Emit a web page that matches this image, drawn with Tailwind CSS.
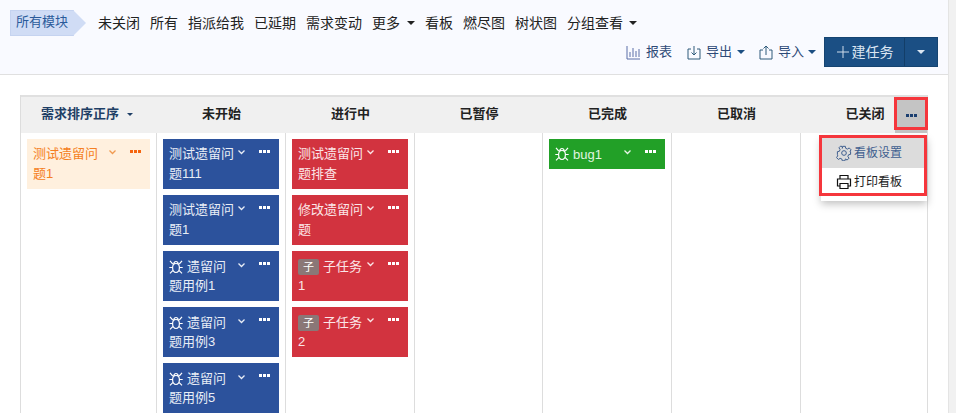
<!DOCTYPE html>
<html><head><meta charset="utf-8"><script src="https://cdn.jsdelivr.net/npm/@tailwindcss/browser@4"></script></head>
<body class="bg-white">
<div class="relative w-[956px] h-[413px] overflow-hidden flex font-['Liberation_Sans','Noto_Sans_CJK_SC',sans-serif] text-[13px] text-[#222]">
 <div class="w-[948px] shrink-0 h-full flex flex-col">
  <div class="h-[75px] shrink-0 bg-[#f9faff] border-b border-[#e0e0e0] pl-[10px] pr-[10px] flex flex-col">
   <div class="flex items-center h-[26px] mt-[10px]">
    <div class="relative h-[26px] w-[64px] bg-[#d0dcf5] border border-[#c5d3f0] text-[#2a5a9a] pl-[5px] leading-[22px]">所有模块
     <span class="absolute left-[62px] top-[-1px] w-0 h-0 border-y-[13px] border-y-transparent border-l-[13px] border-l-[#d0dcf5]"></span>
    </div>
    <div class="flex gap-[10px] ml-[24px] items-center leading-[26px] text-[14px]">
     <span>未关闭</span><span>所有</span><span>指派给我</span><span>已延期</span><span>需求变动</span>
     <span class="flex items-center gap-[7px]">更多<i class="w-0 h-0 border-x-[4px] border-x-transparent border-t-[4px] border-t-[#222]"></i></span>
     <span>看板</span><span>燃尽图</span><span>树状图</span>
     <span class="flex items-center gap-[6px]">分组查看<i class="w-0 h-0 border-x-[4px] border-x-transparent border-t-[4px] border-t-[#222]"></i></span>
    </div>
   </div>
   <div class="flex items-center justify-end h-[30px] mt-[1px] text-[#2e4a78]">
    <span class="flex items-center gap-[5px]">
     <svg width="15" height="15" viewBox="0 0 15 15" fill="none" stroke="#5b6fa8"><path d="M1 1v13h13M4 12V7M7 12V3M10 12V6M13 12V4"/></svg>报表</span>
    <span class="flex items-center gap-[5px] ml-[15px]">
     <svg width="14" height="15" viewBox="0 0 14 15" fill="none" stroke="#2e5a7a"><path d="M4 4H1v10h12V4h-3M7 1v9M4.5 7.5L7 10l2.500-2.500"/></svg>导出<i class="w-0 h-0 border-x-[4px] border-x-transparent border-t-[4px] border-t-[#1c4f82]"></i></span>
    <span class="flex items-center gap-[5px] ml-[14px]">
     <svg width="14" height="15" viewBox="0 0 14 15" fill="none" stroke="#2e5a7a"><path d="M4 5H1v9h12V5h-3M7 10V1M4.500 3.500L7 1l2.500 2.500"/></svg>导入<i class="w-0 h-0 border-x-[4px] border-x-transparent border-t-[4px] border-t-[#1c4f82] ml-[-1px]"></i></span>
    <div class="flex h-[30px] ml-[8px] bg-[#1b4f84] text-[#dbe6f2] text-[14px] border border-[#164471]">
     <span class="w-[80px] flex items-center justify-center gap-[2px] border-r border-[#133e68]">
      <svg width="14" height="14" viewBox="0 0 14 14" stroke="#cfdcea" fill="none"><path d="M7 1v12M1 7h12"/></svg>建任务</span>
     <span class="w-[32px] flex items-center justify-center"><i class="w-0 h-0 border-x-[4px] border-x-transparent border-t-[4px] border-t-[#dbe6f2]"></i></span>
    </div>
   </div>
  </div>
  <div class="pl-[20px] pt-[20px] flex-1 min-h-0">
   <div class="w-[908px] h-full flex flex-col border-l border-r border-[#ddd]">
    <div class="h-[38px] shrink-0 pb-[2px] bg-[#f0f0f0] border-t-2 border-[#e0e0e0] grid grid-cols-[136px_129px_129px_128px_129px_129px_128px] font-bold text-[13px] items-center text-center relative">
     <div class="text-[#1f3f66] flex items-center justify-center gap-[8px] pr-[4px]">需求排序正序<i class="w-0 h-0 border-x-[3px] border-x-transparent border-t-[3px] border-t-[#1f3f66]"></i></div>
     <div>未开始</div><div>进行中</div><div>已暂停</div><div>已完成</div><div>已取消</div>
     <div>已关闭</div>
     <div class="absolute right-0 top-0 w-[32px] h-[36px] bg-[#c4c4c4] flex items-center justify-center gap-[1px]">
      <i class="w-[3px] h-[3px] bg-[#1c3f70]"></i><i class="w-[3px] h-[3px] bg-[#1c3f70]"></i><i class="w-[3px] h-[3px] bg-[#1c3f70]"></i>
     </div>
    </div>
    <div class="flex-1 min-h-0 grid grid-cols-[136px_129px_129px_128px_129px_129px_128px] overflow-hidden">
     <div class="border-r border-[#ddd] pt-[6px] pl-[6px] pr-[6px]">
      <div class="relative h-[50px] bg-[#fff0de] text-[#f57f22] pl-[6px] pt-[5px] pr-[6px] leading-[20px]"><div class="w-[70px]">测试遗留问题1</div>
       <svg class="absolute left-[82px] top-[11px]" width="7" height="5" viewBox="0 0 7 5" fill="none" stroke="#f09a50" stroke-width="1.300"><path d="M.5 .5L3.500 3.500 6.500 .5"/></svg>
       <div class="absolute right-[9px] top-[11px] flex gap-[1px]"><i class="w-[3px] h-[3px] bg-[#f5650f]"></i><i class="w-[3px] h-[3px] bg-[#f5650f]"></i><i class="w-[3px] h-[3px] bg-[#f5650f]"></i></div>
      </div>
     </div>
     <div class="border-r border-[#ddd] pt-[6px] pl-[6px] pr-[6px] flex flex-col gap-[6px]">
      <div class="relative h-[50px] shrink-0 bg-[#2c529c] text-[#e8edf6] pl-[6px] pt-[5px] leading-[20px]"><div class="w-[70px]">测试遗留问题111</div>
       <svg class="absolute left-[75px] top-[11px]" width="7" height="5" viewBox="0 0 7 5" fill="none" stroke="#e8edf6" stroke-width="1.300"><path d="M.5 .5L3.500 3.500 6.500 .5"/></svg>
       <div class="absolute right-[9px] top-[11px] flex gap-[1px]"><i class="w-[3px] h-[3px] bg-white"></i><i class="w-[3px] h-[3px] bg-white"></i><i class="w-[3px] h-[3px] bg-white"></i></div>
      </div>
      <div class="relative h-[50px] shrink-0 bg-[#2c529c] text-[#e8edf6] pl-[6px] pt-[5px] leading-[20px]"><div class="w-[70px]">测试遗留问题1</div>
       <svg class="absolute left-[75px] top-[11px]" width="7" height="5" viewBox="0 0 7 5" fill="none" stroke="#e8edf6" stroke-width="1.300"><path d="M.5 .5L3.500 3.500 6.500 .5"/></svg>
       <div class="absolute right-[9px] top-[11px] flex gap-[1px]"><i class="w-[3px] h-[3px] bg-white"></i><i class="w-[3px] h-[3px] bg-white"></i><i class="w-[3px] h-[3px] bg-white"></i></div>
      </div>
      <div class="relative h-[50px] shrink-0 bg-[#2c529c] text-[#e8edf6] pl-[6px] pt-[5px] leading-[20px]"><div class="flex items-start gap-[4px] h-[20px] pt-[1px]"><svg class="mt-[3px]" width="14" height="14" viewBox="0 0 14 14" fill="none" stroke="#fff" stroke-width="1.200"><path d="M7 3.500c2.200 0 3.400 1.800 3.400 4.300S9 12.500 7 12.500 3.600 10.300 3.600 7.800 4.800 3.500 7 3.500zM4.800 3.800C5 2.400 5.900 1.500 7 1.500s2 .9 2.200 2.300M1 .8l2.800 3.400M13 .8l-2.800 3.400M.3 7.500h3.300M13.700 7.500h-3.300M1 13.300l3-3M13 13.300l-3-3"/></svg>遗留问</div><div>题用例1</div>
       <svg class="absolute left-[75px] top-[12px]" width="7" height="5" viewBox="0 0 7 5" fill="none" stroke="#e8edf6" stroke-width="1.300"><path d="M.5 .5L3.500 3.500 6.500 .5"/></svg>
       <div class="absolute right-[9px] top-[11px] flex gap-[1px]"><i class="w-[3px] h-[3px] bg-white"></i><i class="w-[3px] h-[3px] bg-white"></i><i class="w-[3px] h-[3px] bg-white"></i></div>
      </div>
      <div class="relative h-[50px] shrink-0 bg-[#2c529c] text-[#e8edf6] pl-[6px] pt-[5px] leading-[20px]"><div class="flex items-start gap-[4px] h-[20px] pt-[1px]"><svg class="mt-[3px]" width="14" height="14" viewBox="0 0 14 14" fill="none" stroke="#fff" stroke-width="1.200"><path d="M7 3.500c2.200 0 3.400 1.800 3.400 4.300S9 12.500 7 12.500 3.600 10.300 3.600 7.800 4.800 3.500 7 3.500zM4.800 3.800C5 2.400 5.900 1.500 7 1.500s2 .9 2.200 2.300M1 .8l2.800 3.400M13 .8l-2.800 3.400M.3 7.500h3.300M13.700 7.500h-3.300M1 13.300l3-3M13 13.300l-3-3"/></svg>遗留问</div><div>题用例3</div>
       <svg class="absolute left-[75px] top-[12px]" width="7" height="5" viewBox="0 0 7 5" fill="none" stroke="#e8edf6" stroke-width="1.300"><path d="M.5 .5L3.500 3.500 6.500 .5"/></svg>
       <div class="absolute right-[9px] top-[11px] flex gap-[1px]"><i class="w-[3px] h-[3px] bg-white"></i><i class="w-[3px] h-[3px] bg-white"></i><i class="w-[3px] h-[3px] bg-white"></i></div>
      </div>
      <div class="relative h-[50px] shrink-0 bg-[#2c529c] text-[#e8edf6] pl-[6px] pt-[5px] leading-[20px]"><div class="flex items-start gap-[4px] h-[20px] pt-[1px]"><svg class="mt-[3px]" width="14" height="14" viewBox="0 0 14 14" fill="none" stroke="#fff" stroke-width="1.200"><path d="M7 3.500c2.200 0 3.400 1.800 3.400 4.300S9 12.500 7 12.500 3.600 10.300 3.600 7.800 4.800 3.500 7 3.500zM4.800 3.800C5 2.400 5.900 1.500 7 1.500s2 .9 2.200 2.300M1 .8l2.800 3.400M13 .8l-2.800 3.400M.3 7.500h3.300M13.700 7.500h-3.300M1 13.300l3-3M13 13.300l-3-3"/></svg>遗留问</div><div>题用例5</div>
       <svg class="absolute left-[75px] top-[12px]" width="7" height="5" viewBox="0 0 7 5" fill="none" stroke="#e8edf6" stroke-width="1.300"><path d="M.5 .5L3.500 3.500 6.500 .5"/></svg>
       <div class="absolute right-[9px] top-[11px] flex gap-[1px]"><i class="w-[3px] h-[3px] bg-white"></i><i class="w-[3px] h-[3px] bg-white"></i><i class="w-[3px] h-[3px] bg-white"></i></div>
      </div>
     </div>
     <div class="border-r border-[#ddd] pt-[6px] pl-[6px] pr-[6px] flex flex-col gap-[6px]">
      <div class="relative h-[50px] shrink-0 bg-[#d2333f] text-[#fbe6e8] pl-[6px] pt-[5px] leading-[20px]"><div class="w-[70px]">测试遗留问题排查</div>
       <svg class="absolute left-[75px] top-[11px]" width="7" height="5" viewBox="0 0 7 5" fill="none" stroke="#fbe6e8" stroke-width="1.300"><path d="M.5 .5L3.500 3.500 6.500 .5"/></svg>
       <div class="absolute right-[9px] top-[11px] flex gap-[1px]"><i class="w-[3px] h-[3px] bg-white"></i><i class="w-[3px] h-[3px] bg-white"></i><i class="w-[3px] h-[3px] bg-white"></i></div>
      </div>
      <div class="relative h-[50px] shrink-0 bg-[#d2333f] text-[#fbe6e8] pl-[6px] pt-[5px] leading-[20px]"><div class="w-[70px]">修改遗留问题</div>
       <svg class="absolute left-[75px] top-[11px]" width="7" height="5" viewBox="0 0 7 5" fill="none" stroke="#fbe6e8" stroke-width="1.300"><path d="M.5 .5L3.500 3.500 6.500 .5"/></svg>
       <div class="absolute right-[9px] top-[11px] flex gap-[1px]"><i class="w-[3px] h-[3px] bg-white"></i><i class="w-[3px] h-[3px] bg-white"></i><i class="w-[3px] h-[3px] bg-white"></i></div>
      </div>
      <div class="relative h-[50px] shrink-0 bg-[#d2333f] text-[#fbe6e8] pl-[6px] pt-[5px] leading-[20px]"><div class="flex items-start gap-[4px] h-[20px] pt-[1px]"><span class="w-[21px] h-[16px] mt-[2px] rounded-[2px] bg-[#8a7777] text-white text-[11px] leading-[16px] text-center">子</span>子任务</div><div>1</div>
       <svg class="absolute left-[75px] top-[11px]" width="7" height="5" viewBox="0 0 7 5" fill="none" stroke="#fbe6e8" stroke-width="1.300"><path d="M.5 .5L3.500 3.500 6.500 .5"/></svg>
       <div class="absolute right-[9px] top-[11px] flex gap-[1px]"><i class="w-[3px] h-[3px] bg-white"></i><i class="w-[3px] h-[3px] bg-white"></i><i class="w-[3px] h-[3px] bg-white"></i></div>
      </div>
      <div class="relative h-[50px] shrink-0 bg-[#d2333f] text-[#fbe6e8] pl-[6px] pt-[5px] leading-[20px]"><div class="flex items-start gap-[4px] h-[20px] pt-[1px]"><span class="w-[21px] h-[16px] mt-[2px] rounded-[2px] bg-[#8a7777] text-white text-[11px] leading-[16px] text-center">子</span>子任务</div><div>2</div>
       <svg class="absolute left-[75px] top-[11px]" width="7" height="5" viewBox="0 0 7 5" fill="none" stroke="#fbe6e8" stroke-width="1.300"><path d="M.5 .5L3.500 3.500 6.500 .5"/></svg>
       <div class="absolute right-[9px] top-[11px] flex gap-[1px]"><i class="w-[3px] h-[3px] bg-white"></i><i class="w-[3px] h-[3px] bg-white"></i><i class="w-[3px] h-[3px] bg-white"></i></div>
      </div>
     </div>
     <div class="border-r border-[#ddd]"></div>
     <div class="border-r border-[#ddd] pt-[6px] pl-[6px] pr-[6px]">
      <div class="relative h-[30px] bg-[#22a027] text-[#e0f5e0] pl-[6px] pt-[5px] leading-[20px]"><div class="flex items-start gap-[4px] h-[20px] pt-[1px]"><svg class="mt-[2px]" width="14" height="14" viewBox="0 0 14 14" fill="none" stroke="#fff" stroke-width="1.200"><path d="M7 3.500c2.200 0 3.400 1.800 3.400 4.300S9 12.500 7 12.500 3.600 10.300 3.600 7.800 4.800 3.500 7 3.500zM4.800 3.800C5 2.400 5.900 1.500 7 1.500s2 .9 2.200 2.300M1 .8l2.800 3.400M13 .8l-2.800 3.400M.3 7.500h3.300M13.700 7.500h-3.300M1 13.300l3-3M13 13.300l-3-3"/></svg>bug1</div>
       <svg class="absolute left-[75px] top-[11px]" width="7" height="5" viewBox="0 0 7 5" fill="none" stroke="#e8f5e8" stroke-width="1.300"><path d="M.5 .5L3.500 3.500 6.500 .5"/></svg>
       <div class="absolute right-[9px] top-[11px] flex gap-[1px]"><i class="w-[3px] h-[3px] bg-white"></i><i class="w-[3px] h-[3px] bg-white"></i><i class="w-[3px] h-[3px] bg-white"></i></div>
      </div>
     </div>
     <div class="border-r border-[#ddd]"></div>
     <div></div>
    </div>
   </div>
  </div>
 </div>
 <div class="flex-1 bg-[#f1f1f1] border-l border-[#e4e4e4]"></div>

 <!-- dropdown menu -->
 <div class="absolute left-[821px] top-[137px] w-[106px] h-[64px] bg-white shadow-[0_3px_8px_rgba(0,0,0,0.25)] text-[12px]">
  <div class="h-[31px] bg-[#dcdcdc] text-[#3f5f8f] flex items-center pl-[15px] gap-[2px]">
   <svg width="16" height="16" viewBox="0 0 24 24" fill="none" stroke="#3f5f8f" stroke-width="1.500"><circle cx="12" cy="12" r="3.500"/><path d="M10 2h4l.6 3 2.600 1.100 2.600-1.700 2.800 2.800-1.700 2.600L21.900 10v4l-3 .6-1.100 2.600 1.700 2.600-2.800 2.800-2.600-1.700-.1.100-.6 2.700h-4l-.6-2.700-2.600-1-2.600 1.700-2.800-2.800 1.700-2.600L2.100 14v-4l3-.6 1-2.600-1.700-2.600 2.800-2.800 2.600 1.700L9.400 5z"/></svg>看板设置</div>
  <div class="h-[29px] flex items-center pl-[15px] pb-[2px] gap-[2px] text-[#222]">
   <svg width="16" height="16" viewBox="0 0 16 16" fill="none" stroke="#111" stroke-width="1.200"><path d="M4 5V1.500h8V5M4 12H1.500V5h13v7H12M4 9.500h8v5H4z"/></svg>打印看板</div>
 </div>
 <!-- red annotations -->
 <div class="absolute left-[894px] top-[97px] w-[34px] h-[33px] border-[3px] border-[#f5363c] pointer-events-none"></div>
 <div class="absolute left-[819px] top-[135px] w-[108px] h-[61px] border-[3px] border-[#f5363c] pointer-events-none"></div>
</div>
</body></html>
